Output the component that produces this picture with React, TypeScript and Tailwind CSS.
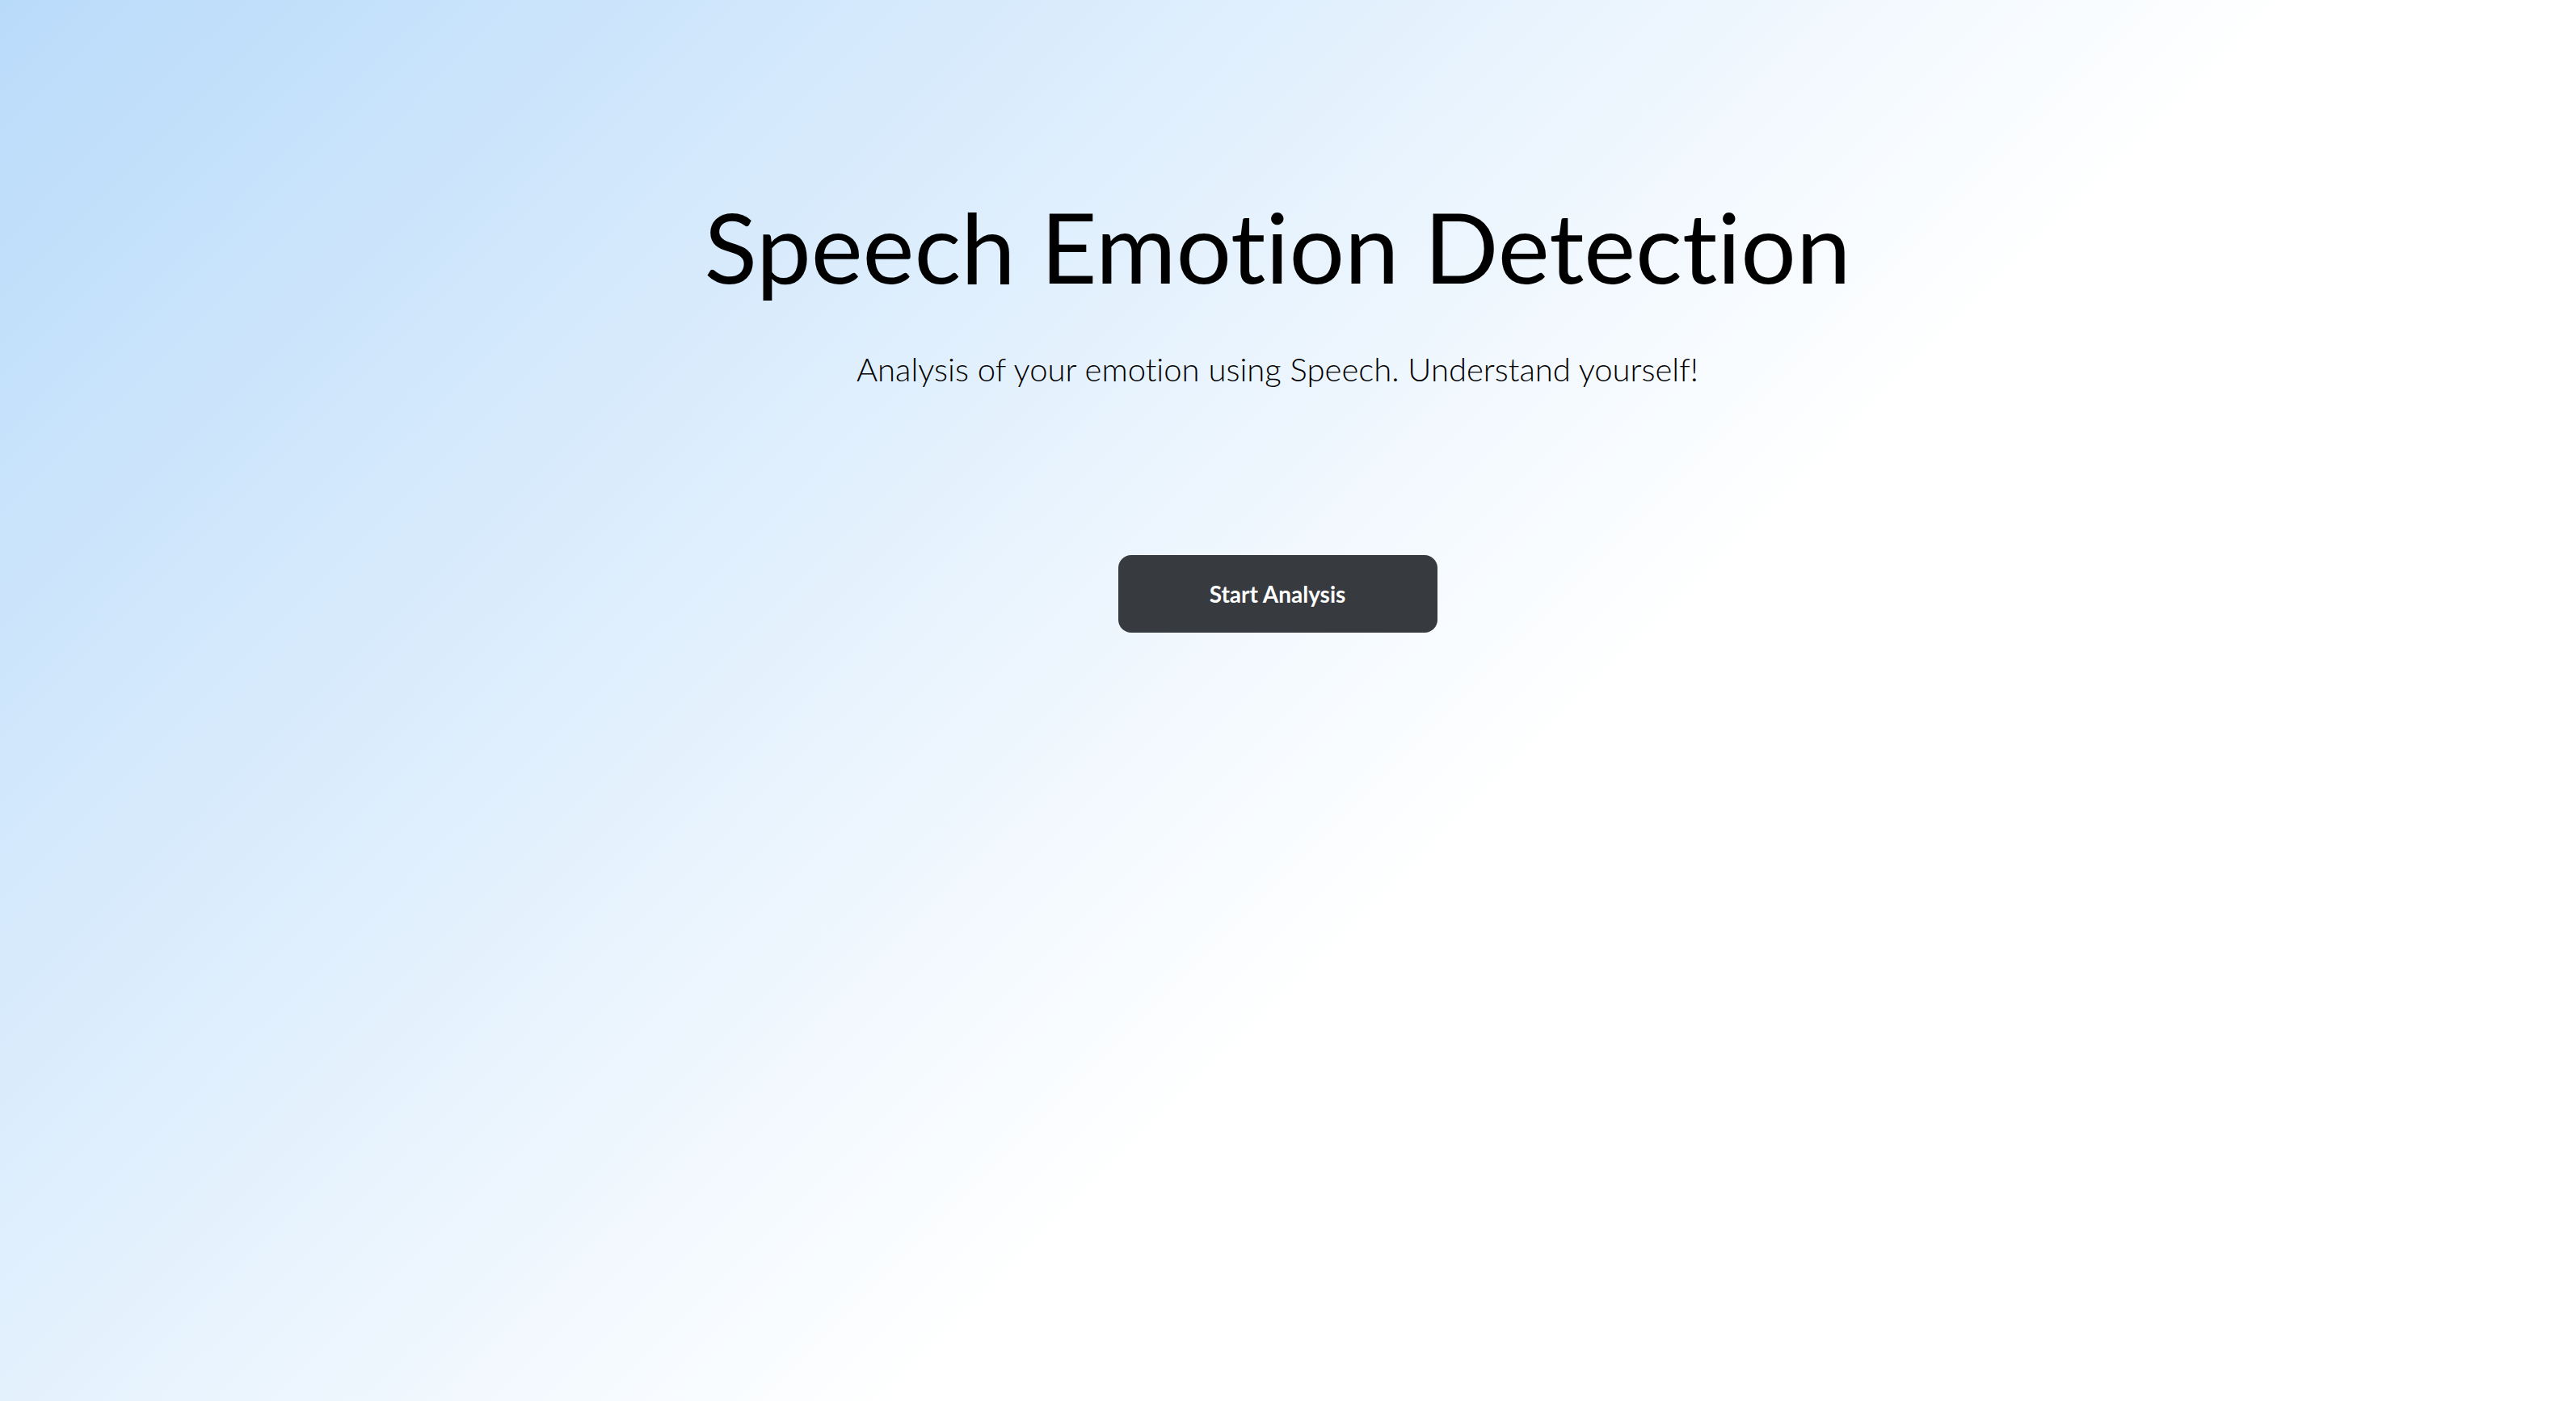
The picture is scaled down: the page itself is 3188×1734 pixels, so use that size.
export default function App() {
  return (
    <div
      className="min-h-screen w-full bg-[linear-gradient(135deg,#b9dbfa_0%,#ffffff_58%)] flex flex-col items-center pr-[26px] pt-[244px] text-black [font-variant-ligatures:none]"
      style={{ fontFamily: 'Lato, "Noto Sans", sans-serif' }}
    >
      <h1 className="text-[121px] leading-none font-normal tracking-normal">Speech Emotion Detection</h1>
      <p className="mt-[72px] text-[40px] leading-none font-light">
        Analysis of your emotion using Speech. Understand yourself!
      </p>
      <button className="mt-[210px] w-[395px] h-[96px] rounded-[16px] bg-[#373a3e] text-white text-[28px] font-bold">
        Start Analysis
      </button>
    </div>
  );
}
